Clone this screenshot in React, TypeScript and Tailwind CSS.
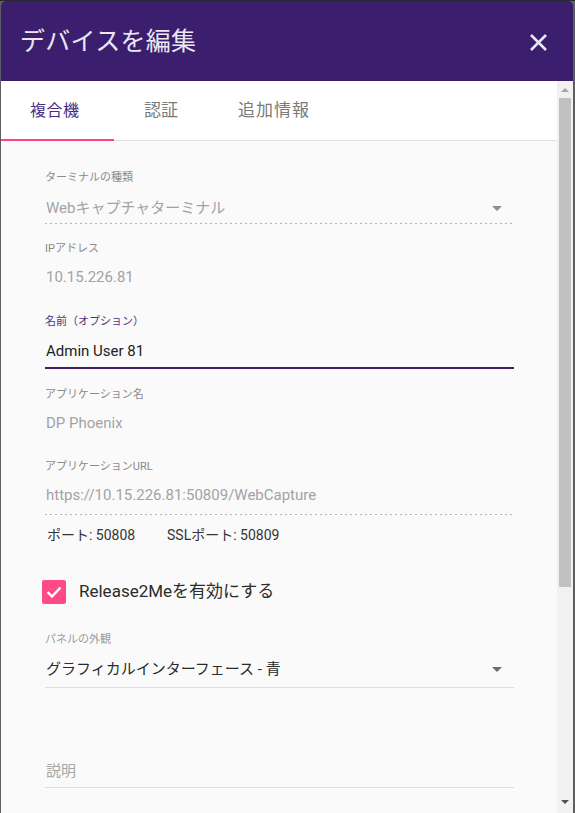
import React from "react";

const Caret = ({ color }: { color: string }) => (
  <svg width="10" height="5" viewBox="0 0 10 5" className="shrink-0">
    <path d="M0 0 L10 0 L5 5 Z" fill={color} />
  </svg>
);

export default function App() {
  const dotted =
    "h-[1px] bg-[linear-gradient(to_right,#b5b5b5_0%,#b5b5b5_40%,transparent_40%)] bg-[length:5px_1px] bg-repeat-x";
  return (
    <div className="h-[813px] w-[575px] overflow-hidden bg-[#5e5e5e] border-t border-[#2a2a2a] pl-[1px] pr-[2px] font-['Roboto','Noto_Sans_CJK_JP',sans-serif]">
      <div className="h-full rounded-t-[4px] overflow-hidden flex flex-col bg-[#fafafa]">
        <header className="h-[80px] shrink-0 bg-[#3b1f6e] flex items-center justify-between pl-[19px] pr-[25px]">
          <h1 className="text-[25px] leading-none text-[#ebe7f2] font-normal tracking-[0.3px]">
            デバイスを編集
          </h1>
          <svg width="19" height="19" viewBox="0 0 19 19" className="mt-[2px]">
            <path d="M2 2 L17 17 M17 2 L2 17" stroke="#ebe7f2" strokeWidth="2.6" strokeLinecap="butt" />
          </svg>
        </header>
        <div className="flex flex-1 min-h-0">
          <div className="flex-1 flex flex-col min-w-0">
            <nav className="h-[60px] shrink-0 bg-white border-b border-[#e0e0e0] flex">
              <div className="relative w-[113px] pl-[29px] flex items-center text-[16px] tracking-[0.5px] text-[#4a2d80]">
                複合機
                <span className="absolute left-0 right-0 bottom-[-1px] h-[2px] bg-[#ff4081]" />
              </div>
              <div className="px-[30px] flex items-center text-[17px] text-[#7a7a7a]">認証</div>
              <div className="px-[30px] flex items-center text-[17px] tracking-[1px] text-[#7a7a7a]">追加情報</div>
            </nav>
            <main className="flex-1 pl-[44px] pr-[43px] pt-[29px]">
              {/* Terminal type */}
              <div className="text-[11px] leading-[16px] text-[#8a8a8a]">ターミナルの種類</div>
              <div className="mt-[10px] flex items-center justify-between pl-[1px] pr-[12px] h-[24px]">
                <span className="text-[15px] text-[#a3a3a3]">Webキャプチャターミナル</span>
                <Caret color="#8e8e8e" />
              </div>
              <div className={`mt-[3px] ${dotted}`} />

              {/* IP */}
              <div className="mt-[17px] text-[11px] leading-[16px] text-[#8a8a8a]">IPアドレス</div>
              <div className="mt-[8px] h-[24px] flex items-center pl-[1px] text-[15px] text-[#a3a3a3]">10.15.226.81</div>

              {/* Name */}
              <div className="mt-[25px] text-[11px] leading-[16px] text-[#4e3186]">名前（オプション）</div>
              <div className="mt-[9px] h-[24px] flex items-center pl-[1px] text-[15px] text-[#212121]">Admin User 81</div>
              <div className="mt-[4px] h-[2px] bg-[#3b1f6e]" />

              {/* App name */}
              <div className="mt-[18px] text-[11px] leading-[16px] text-[#8a8a8a]">アプリケーション名</div>
              <div className="mt-[8px] h-[24px] flex items-center pl-[1px] text-[15px] text-[#a3a3a3]">DP Phoenix</div>

              {/* App URL */}
              <div className="mt-[24px] text-[11px] leading-[16px] text-[#8a8a8a]">アプリケーションURL</div>
              <div className="mt-[8px] h-[24px] flex items-center pl-[1px] text-[15px] text-[#a3a3a3]">
                https://10.15.226.81:50809/WebCapture
              </div>
              <div className={`mt-[7px] ${dotted}`} />

              {/* Ports */}
              <div className="mt-[10px] h-[20px] flex items-center pl-[2px] text-[14px] text-[#333333]">
                <span className="w-[120px]">ポート: 50808</span>
                <span>SSLポート: 50809</span>
              </div>

              {/* Checkbox */}
              <div className="mt-[35px] h-[24px] flex items-center -ml-[3px]">
                <div className="w-[24px] h-[24px] rounded-[2px] bg-[#ff4a89] flex items-center justify-center">
                  <svg width="16" height="12" viewBox="0 0 16 12">
                    <path d="M1.5 6 L6 10.5 L14.5 1.5" fill="none" stroke="#ffffff" strokeWidth="2.4" />
                  </svg>
                </div>
                <span className="ml-[13px] text-[17px] text-[#2b2b2b]">Release2Meを有効にする</span>
              </div>

              {/* Panel appearance */}
              <div className="mt-[28px] text-[11px] leading-[16px] text-[#9a9a9a]">パネルの外観</div>
              <div className="mt-[9px] flex items-center justify-between pl-[1px] pr-[12px] h-[24px]">
                <span className="text-[15px] text-[#2b2b2b]">グラフィカルインターフェース - 青</span>
                <Caret color="#6e6e6e" />
              </div>
              <div className="mt-[6px] h-[1px] bg-[#dedede]" />

              {/* Description */}
              <div className="mt-[71px] h-[24px] flex items-center pl-[1px] text-[15px] text-[#a6a6a6]">説明</div>
              <div className="mt-[4px] h-[1px] bg-[#dedede]" />
            </main>
          </div>
          <div className="w-[16px] shrink-0 bg-[#f1f1f1] flex flex-col">
            <div className="h-[17px] flex items-center justify-center">
              <svg width="8" height="4" viewBox="0 0 8 4">
                <path d="M0 4 L8 4 L4 0 Z" fill="#a3a3a3" />
              </svg>
            </div>
            <div className="h-[489px] mx-[2px] bg-[#c1c1c1]" />
            <div className="flex-1" />
            <div className="h-[17px] mb-[3px] flex items-center justify-center">
              <svg width="8" height="4" viewBox="0 0 8 4">
                <path d="M0 0 L8 0 L4 4 Z" fill="#505050" />
              </svg>
            </div>
          </div>
        </div>
      </div>
    </div>
  );
}
